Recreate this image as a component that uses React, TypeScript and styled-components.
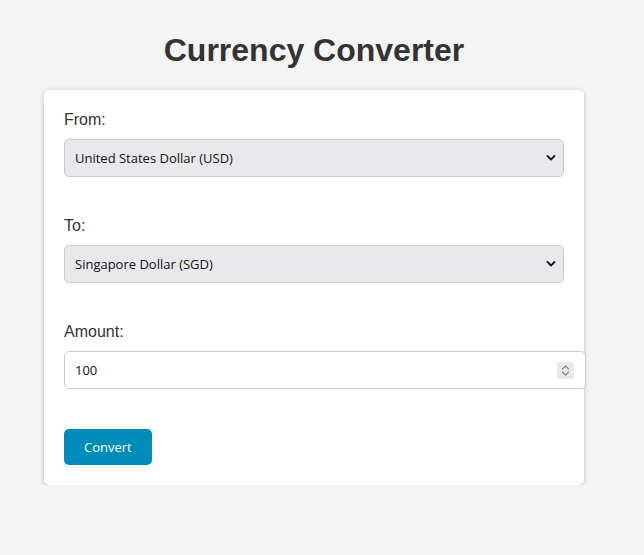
import React, { useState } from "react";
import styled, { createGlobalStyle } from "styled-components";

const GlobalStyle = createGlobalStyle`
  html, body {
    margin: 0;
    padding: 0;
    background: #f4f4f4;
  }
  body {
    font-family: "Liberation Sans", Arial, sans-serif;
    color: #333;
  }
`;

const Page = styled.main`
  width: 628px;
  display: flex;
  flex-direction: column;
  align-items: center;
  padding-top: 32px;
`;

const Title = styled.h1`
  margin: 0;
  font-size: 32px;
  line-height: 37px;
  font-weight: 700;
  color: #333;
`;

const Card = styled.form`
  box-sizing: border-box;
  width: 540px;
  margin-top: 21px;
  padding: 21px 20px 20px;
  background: #fff;
  border-radius: 5px;
  box-shadow: 0 1px 5px rgba(0, 0, 0, 0.24);
  display: flex;
  flex-direction: column;
  align-items: flex-start;
`;

const Group = styled.div`
  width: 100%;
  margin-bottom: 40px;
`;

const Label = styled.label`
  display: block;
  font-size: 16px;
  line-height: 18px;
  margin-bottom: 10px;
  color: #333;
`;

const ControlWrap = styled.div<{ $overflow?: number }>`
  position: relative;
  width: ${(p) => (p.$overflow ? `calc(100% + ${p.$overflow}px)` : "100%")};
`;

const controlFont = `"Open Sans", "Noto Sans", sans-serif`;

const Select = styled.select`
  box-sizing: border-box;
  display: block;
  width: 100%;
  height: 38px;
  padding: 0 30px 0 10px;
  appearance: none;
  -webkit-appearance: none;
  background: #e9e9ed;
  border: 1px solid #c9c9cf;
  border-radius: 5px;
  font-family: ${controlFont};
  font-size: 13px;
  color: #111;
  outline: none;
`;

const Input = styled.input`
  box-sizing: border-box;
  display: block;
  width: 100%;
  height: 38px;
  padding: 0 10px;
  background: #fff;
  border: 1px solid #ccc;
  border-radius: 5px;
  font-family: ${controlFont};
  font-size: 13px;
  color: #111;
  outline: none;
  -moz-appearance: textfield;
  &::-webkit-inner-spin-button,
  &::-webkit-outer-spin-button {
    -webkit-appearance: none;
    margin: 0;
  }
`;

const Chevron = styled.svg`
  position: absolute;
  right: 8px;
  top: 50%;
  transform: translateY(-50%);
  pointer-events: none;
`;

const Spinner = styled.span`
  position: absolute;
  right: 12px;
  top: 11px;
  width: 17px;
  height: 17px;
  background: #e9e9ed;
  border-radius: 2px;
  display: flex;
  align-items: center;
  justify-content: center;
  pointer-events: none;
`;

const Button = styled.button`
  padding: 0 20px;
  height: 36px;
  background: #008cba;
  color: #fff;
  border: none;
  border-radius: 5px;
  font-family: ${controlFont};
  font-size: 13px;
  cursor: pointer;
`;

const currencies = [
  { code: "USD", name: "United States Dollar" },
  { code: "SGD", name: "Singapore Dollar" },
  { code: "EUR", name: "Euro" },
  { code: "GBP", name: "British Pound" },
  { code: "JPY", name: "Japanese Yen" },
];

function SelectField({
  label,
  id,
  value,
  onChange,
}: {
  label: string;
  id: string;
  value: string;
  onChange: (v: string) => void;
}) {
  return (
    <Group>
      <Label htmlFor={id}>{label}</Label>
      <ControlWrap>
        <Select id={id} value={value} onChange={(e) => onChange(e.target.value)}>
          {currencies.map((c) => (
            <option key={c.code} value={c.code}>
              {c.name} ({c.code})
            </option>
          ))}
        </Select>
        <Chevron width="10" height="7" viewBox="0 0 10 7">
          <path d="M1.5 1.5 L5 5 L8.5 1.5" fill="none" stroke="#1b1b1b" strokeWidth="1.8" strokeLinecap="round" strokeLinejoin="round" />
        </Chevron>
      </ControlWrap>
    </Group>
  );
}

export default function App() {
  const [from, setFrom] = useState("USD");
  const [to, setTo] = useState("SGD");
  const [amount, setAmount] = useState("100");

  return (
    <>
      <GlobalStyle />
      <Page>
        <Title>Currency Converter</Title>
        <Card onSubmit={(e) => e.preventDefault()}>
          <SelectField label="From:" id="from" value={from} onChange={setFrom} />
          <SelectField label="To:" id="to" value={to} onChange={setTo} />
          <Group>
            <Label htmlFor="amount">Amount:</Label>
            <ControlWrap $overflow={22}>
              <Input id="amount" type="number" value={amount} onChange={(e) => setAmount(e.target.value)} />
              <Spinner>
                <svg width="11" height="13" viewBox="0 0 11 13">
                  <path d="M2.5 5 L5.5 2 L8.5 5" fill="none" stroke="#8a8a8e" strokeWidth="1.2" strokeLinecap="round" strokeLinejoin="round" />
                  <path d="M2.5 8 L5.5 11 L8.5 8" fill="none" stroke="#8a8a8e" strokeWidth="1.2" strokeLinecap="round" strokeLinejoin="round" />
                </svg>
              </Spinner>
            </ControlWrap>
          </Group>
          <Button type="submit">Convert</Button>
        </Card>
      </Page>
    </>
  );
}
